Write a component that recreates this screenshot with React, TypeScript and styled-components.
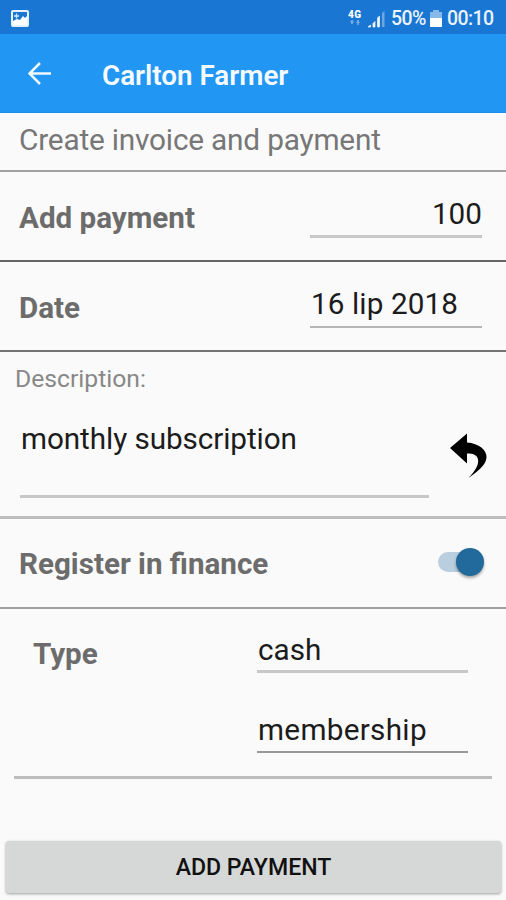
import React from "react";
import styled, { createGlobalStyle } from "styled-components";

const GlobalStyle = createGlobalStyle`
  *, *::before, *::after { box-sizing: border-box; }
  body { margin: 0; background: #fafafa; font-family: Roboto, "Liberation Sans", sans-serif; }
`;

const Screen = styled.main`
  width: 506px;
  height: 900px;
  display: flex;
  flex-direction: column;
  background: #fafafa;
  overflow: hidden;
`;

const StatusBar = styled.div`
  height: 34px;
  flex: none;
  display: flex;
  align-items: center;
  justify-content: space-between;
  padding: 2px 10px 0 11px;
  background: #1976d2;
  color: #e9f3fd;
`;

const StatusGroup = styled.div`
  display: flex;
  align-items: center;
`;

const StatusText = styled.span<{ $width: number }>`
  width: ${(p) => p.$width}px;
  margin-top: 2px;
  font-size: 19.5px;
  line-height: 24px;
  font-weight: 500;
  letter-spacing: -0.6px;
  white-space: nowrap;
`;

const AppBar = styled.header`
  height: 79px;
  flex: none;
  display: flex;
  align-items: flex-start;
  padding: 24px 0 0 28px;
  background: #2196f3;
  border-bottom: 1px solid #1b8ff0;
`;

const BackButton = styled.button`
  width: 74px;
  height: 30px;
  padding: 0;
  border: 0;
  background: none;
  text-align: left;
`;

const Title = styled.h1`
  margin: 1px 0 0;
  font-size: 27.8px;
  line-height: 34px;
  font-weight: 600;
  color: #f4faff;
`;

const Row = styled.section<{ $height: number; $line: string; $top: number }>`
  height: ${(p) => p.$height}px;
  flex: none;
  display: flex;
  justify-content: space-between;
  align-items: flex-start;
  padding: ${(p) => p.$top}px 24px 0 19px;
  border-bottom: 2px solid ${(p) => p.$line};
`;

const Heading = styled.h2`
  margin: 0;
  font-size: 29.8px;
  line-height: 34px;
  font-weight: 400;
  letter-spacing: -0.2px;
  color: #777;
`;

const Label = styled.span`
  margin-top: 4px;
  font-size: 29.6px;
  line-height: 34px;
  font-weight: 700;
  color: #6c6c6c;
`;

const Field = styled.div<{
  $width: number;
  $line: string;
  $thick?: number;
  $align?: string;
  $height?: number;
  $spacing?: number;
}>`
  width: ${(p) => p.$width}px;
  height: ${(p) => p.$height ?? 41}px;
  border-bottom: ${(p) => p.$thick ?? 3}px solid ${(p) => p.$line};
  padding-left: 1px;
  text-align: ${(p) => p.$align ?? "left"};
  font-size: 29.7px;
  line-height: 34px;
  letter-spacing: ${(p) => p.$spacing ?? 0}px;
  color: #1c1c1c;
  white-space: nowrap;
`;

const Description = styled.section`
  height: 167px;
  flex: none;
  padding: 12px 19px 0 15px;
  border-bottom: 3px solid #bdbdbd;
`;

const Caption = styled.div`
  font-size: 24.7px;
  line-height: 30px;
  color: #888;
`;

const DescriptionBody = styled.div`
  display: flex;
  justify-content: space-between;
  padding: 28px 0 0 5px;
`;

const UndoButton = styled.button`
  width: 40px;
  height: 46px;
  margin-top: 11px;
  padding: 0;
  border: 0;
  background: none;
`;

const Switch = styled.div`
  width: 47px;
  height: 32px;
  display: flex;
  align-items: center;
  margin-right: -3px;
  margin-top: 3px;
`;

const Track = styled.div`
  width: 36px;
  height: 20px;
  border-radius: 10px;
  background: #b9cede;
`;

const Thumb = styled.div`
  width: 28px;
  height: 28px;
  flex: none;
  margin-left: -18px;
  border-radius: 50%;
  background: #226a9b;
  box-shadow: 0 2px 3px rgba(0, 0, 0, 0.35);
`;

const TypeSection = styled.section`
  height: 170px;
  flex: none;
  display: flex;
  justify-content: space-between;
  margin: 0 14px;
  padding: 24px 24px 0 19px;
  border-bottom: 3px solid #bdbdbd;
`;

const FieldStack = styled.div`
  display: flex;
  flex-direction: column;
  gap: 40px;
`;

const SubmitButton = styled.button`
  height: 52px;
  flex: none;
  margin: 62px 5px 0 6px;
  padding: 1px 0 0;
  border: 0;
  border-radius: 3px;
  background: #d6d8d7;
  box-shadow: 0 1px 3px rgba(0, 0, 0, 0.38);
  font: 500 23.1px/52px Roboto, "Liberation Sans", sans-serif;
  color: #111;
`;

const Icon = styled.svg`
  display: block;
  flex: none;
`;

const PictureIcon = () => (
  <Icon width="18" height="17" viewBox="0 0 18 17">
    <rect x="1" y="1" width="16" height="15" rx="1" fill="#1976d2" stroke="#e4f1fd" strokeWidth="2" />
    <path d="M2 11l4-2 3 1 3-4 2 2 2-2v9H2z" fill="#fff" />
    <path d="M5.5 3.5v5M3 6h5" stroke="#d5e8fa" strokeWidth="1.3" />
  </Icon>
);

const NetworkIcon = () => (
  <Icon width="43" height="22" viewBox="0 0 43 22">
    <text x="0" y="10.5" fontFamily="Roboto" fontWeight="900" fontSize="10" textLength="13" fill="#fff">4G</text>
    <path d="M2 14h4l-2 3zM8 16h4l-2-3z" fill="#77afe6" />
    <path d="M4 13v4M10 13v5" stroke="#77afe6" strokeWidth="1.5" />
    <path d="M20 20h2.500v-2zM25 20v-3.500l2-2V20zM29.500 20V11l2-2v11z" fill="#f0f7fe" stroke="#f0f7fe" strokeWidth=".7" />
    <path d="M34 20V6l2.500-2v16z" fill="#6da7e2" />
  </Icon>
);

const BatteryIcon = () => (
  <Icon width="12" height="17" viewBox="0 0 12 17">
    <path d="M3 0h6v2h3v7H0V2h3z" fill="#86b9e9" />
    <path d="M0 8h12v9H0z" fill="#fff" />
  </Icon>
);

const BatterySlot = styled.div`
  width: 17px;
`;

const BackIcon = () => (
  <Icon width="24" height="28" viewBox="0 0 24 28">
    <path d="M23 14.500H2M12 4L1.500 14.500 12 25" fill="none" stroke="#eff8ff" strokeWidth="2.500" />
  </Icon>
);

const UndoIcon = () => (
  <Icon width="40" height="46" viewBox="0 0 40 46">
    <path d="M3 15L20 0.500V9.500C32 10.500 40 17 39.500 24.500C39 32 31 38 21.500 45C28 38 32 32 31 26.500C30 21.500 26 20.500 20 20.500V30.500Z" fill="#000" />
  </Icon>
);

export default function App() {
  return (
    <Screen>
      <GlobalStyle />
      <StatusBar>
        <PictureIcon />
        <StatusGroup>
          <NetworkIcon />
          <StatusText $width={39}>50%</StatusText>
          <BatterySlot><BatteryIcon /></BatterySlot>
          <StatusText $width={49}>00:10</StatusText>
        </StatusGroup>
      </StatusBar>
      <AppBar>
        <BackButton aria-label="Back"><BackIcon /></BackButton>
        <Title>Carlton Farmer</Title>
      </AppBar>
      <Row $height={59} $top={10} $line="#a0a0a0">
        <Heading>Create invoice and payment</Heading>
      </Row>
      <Row $height={90} $top={25} $line="#666">
        <Label>Add payment</Label>
        <Field $width={172} $line="#c8c8c8" $align="right">100</Field>
      </Row>
      <Row $height={90} $top={25} $line="#737373">
        <Label>Date</Label>
        <Field $width={172} $line="#b5b5b5" $thick={2} $spacing={0.1}>16 lip 2018</Field>
      </Row>
      <Description>
        <Caption>Description:</Caption>
        <DescriptionBody>
          <Field $width={409} $line="#c8c8c8" $height={76} $spacing={-0.08}>monthly subscription</Field>
          <UndoButton aria-label="Undo"><UndoIcon /></UndoButton>
        </DescriptionBody>
      </Description>
      <Row $height={90} $top={24} $line="#a0a0a0">
        <Label>Register in finance</Label>
        <Switch role="switch" aria-checked="true">
          <Track />
          <Thumb />
        </Switch>
      </Row>
      <TypeSection>
        <Label>Type</Label>
        <FieldStack>
          <Field $width={211} $line="#c8c8c8" $height={40}>cash</Field>
          <Field $width={211} $line="#999" $thick={2} $height={40} $spacing={0.3}>membership</Field>
        </FieldStack>
      </TypeSection>
      <SubmitButton>ADD PAYMENT</SubmitButton>
    </Screen>
  );
}
